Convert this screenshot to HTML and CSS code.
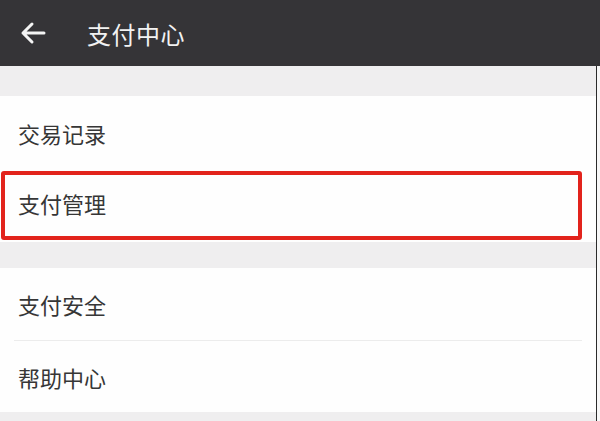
FILE: index.html
```html
<!DOCTYPE html>
<html lang="zh-CN">
<head>
    <meta charset="UTF-8">
    <meta name="viewport" content="width=device-width, initial-scale=1.0">
    <title>支付中心</title>
    <link rel="stylesheet" href="styles.css">
</head>
<body>

    <header class="topbar">
        <a class="back" href="#">
            <svg width="28" height="24" viewBox="0 0 28 24">
                <path d="M25 12H4M13 3l-9 9 9 9" fill="none" stroke="#f4f4f4" stroke-width="3" stroke-linecap="round" stroke-linejoin="round"/>
            </svg>
        </a>
        <h1>支付中心</h1>
    </header>

    <main class="page">
        <div class="gap"></div>
        <section class="group">
            <div class="item first">交易记录</div>
            <div class="item marked">
                <div class="mark">支付管理</div>
            </div>
        </section>
        <div class="gap gap-mid"></div>
        <section class="group">
            <div class="item">支付安全</div>
            <div class="item sep">帮助中心</div>
        </section>
        <div class="gap"></div>
    </main>

</body>
</html>
```

FILE: styles.css
```css
body {
    font-family: "Noto Sans CJK SC", "Noto Sans", sans-serif;
    margin: 0;
    padding: 0;
    width: 600px;
    height: 421px;
    overflow: hidden;
    background-color: #f7f7f7;
    color: #333;
}

.topbar {
    height: 66px;
    background-color: #353437;
    display: flex;
    align-items: center;
    color: #f2f2f2;
}

.back {
    display: flex;
    width: 28px;
    margin-left: 19px;
    margin-right: 40px;
}

.topbar h1 {
    margin: 0;
    font-size: 24px;
    font-weight: 400;
    letter-spacing: 0.5px;
}

.page {
    width: 596px;
    border-right: 1px solid #2b2b2b;
    background-color: #efeeef;
}

.gap {
    height: 30px;
}

.gap-mid {
    height: 26px;
}

.group {
    background: #fefefe;
}

.item {
    height: 72px;
    display: flex;
    align-items: center;
    padding-left: 18px;
    font-size: 22px;
    color: #363636;
}

.item.first {
    height: 74px;
}

.item.sep {
    border-top: 1px solid #ececec;
    height: 71px;
    margin: 0 14px;
    padding-left: 4px;
}

.item.marked {
    padding: 1px 14px 2px 1px;
    height: 69px;
    align-items: stretch;
}

.mark {
    flex: 1;
    display: flex;
    align-items: center;
    padding-left: 13px;
    padding-bottom: 6px;
    border: 4px solid #e2231c;
    border-radius: 3px;
}
```
